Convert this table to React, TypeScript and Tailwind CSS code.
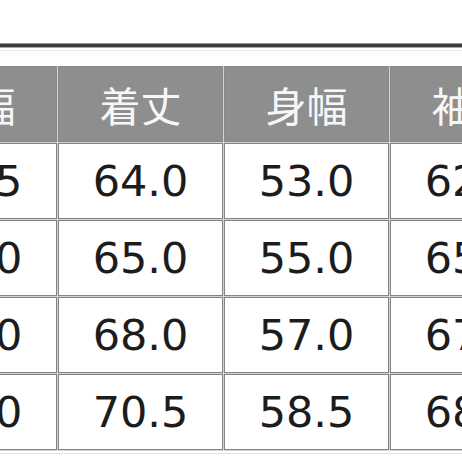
import React from "react";

const headers = ["肩幅", "着丈", "身幅", "袖丈"];
const rows = [
  ["46.5", "64.0", "53.0", "62.0"],
  ["48.0", "65.0", "55.0", "65.0"],
  ["50.0", "68.0", "57.0", "67.0"],
  ["52.0", "70.5", "58.5", "68.0"],
];

export default function App() {
  return (
    <div
      className="w-[462px] h-[462px] overflow-hidden bg-white flex flex-col"
      style={{ fontFamily: '"DejaVu Sans", "Noto Sans CJK JP", sans-serif' }}
    >
      <div className="h-[43px] shrink-0" />
      <div className="h-[1px] bg-[#9a9a9a] shrink-0" />
      <div className="h-[3px] bg-[#3c3c3c] shrink-0" />
      <div className="h-[1px] bg-[#a8a8a8] shrink-0" />
      <div className="h-[2px] shrink-0" />
      <div className="h-[1px] bg-[#ececec] shrink-0" />
      <div className="h-[15px] shrink-0" />
      <div className="ml-[-108px] grid grid-cols-[165px_165px_165px_165px] gap-[1px] w-[663px] shrink-0 bg-[#d4d4d4] border-b border-[#d4d4d4]">
        {headers.map((h) => (
          <div
            key={h}
            className="h-[76px] bg-[#8e8e8e] border-[1.5px] border-[#888888] flex items-center justify-center text-[#f7f7f7] text-[41px] leading-none"
            style={{ fontFamily: '"Noto Sans CJK JP", sans-serif' }}
          >
            {h}
          </div>
        ))}
        {rows.map((r, i) =>
          r.map((v, j) => (
            <div
              key={`${i}-${j}`}
              className="h-[76px] bg-white border-[1.5px] border-[#848484] flex items-center justify-center text-[#1c1c1c] text-[43px] leading-none"
            >
              {v}
            </div>
          ))
        )}
      </div>
      <div className="h-[2px] shrink-0" />
      <div className="h-[1px] bg-[#e0e0e0] shrink-0" />
    </div>
  );
}
